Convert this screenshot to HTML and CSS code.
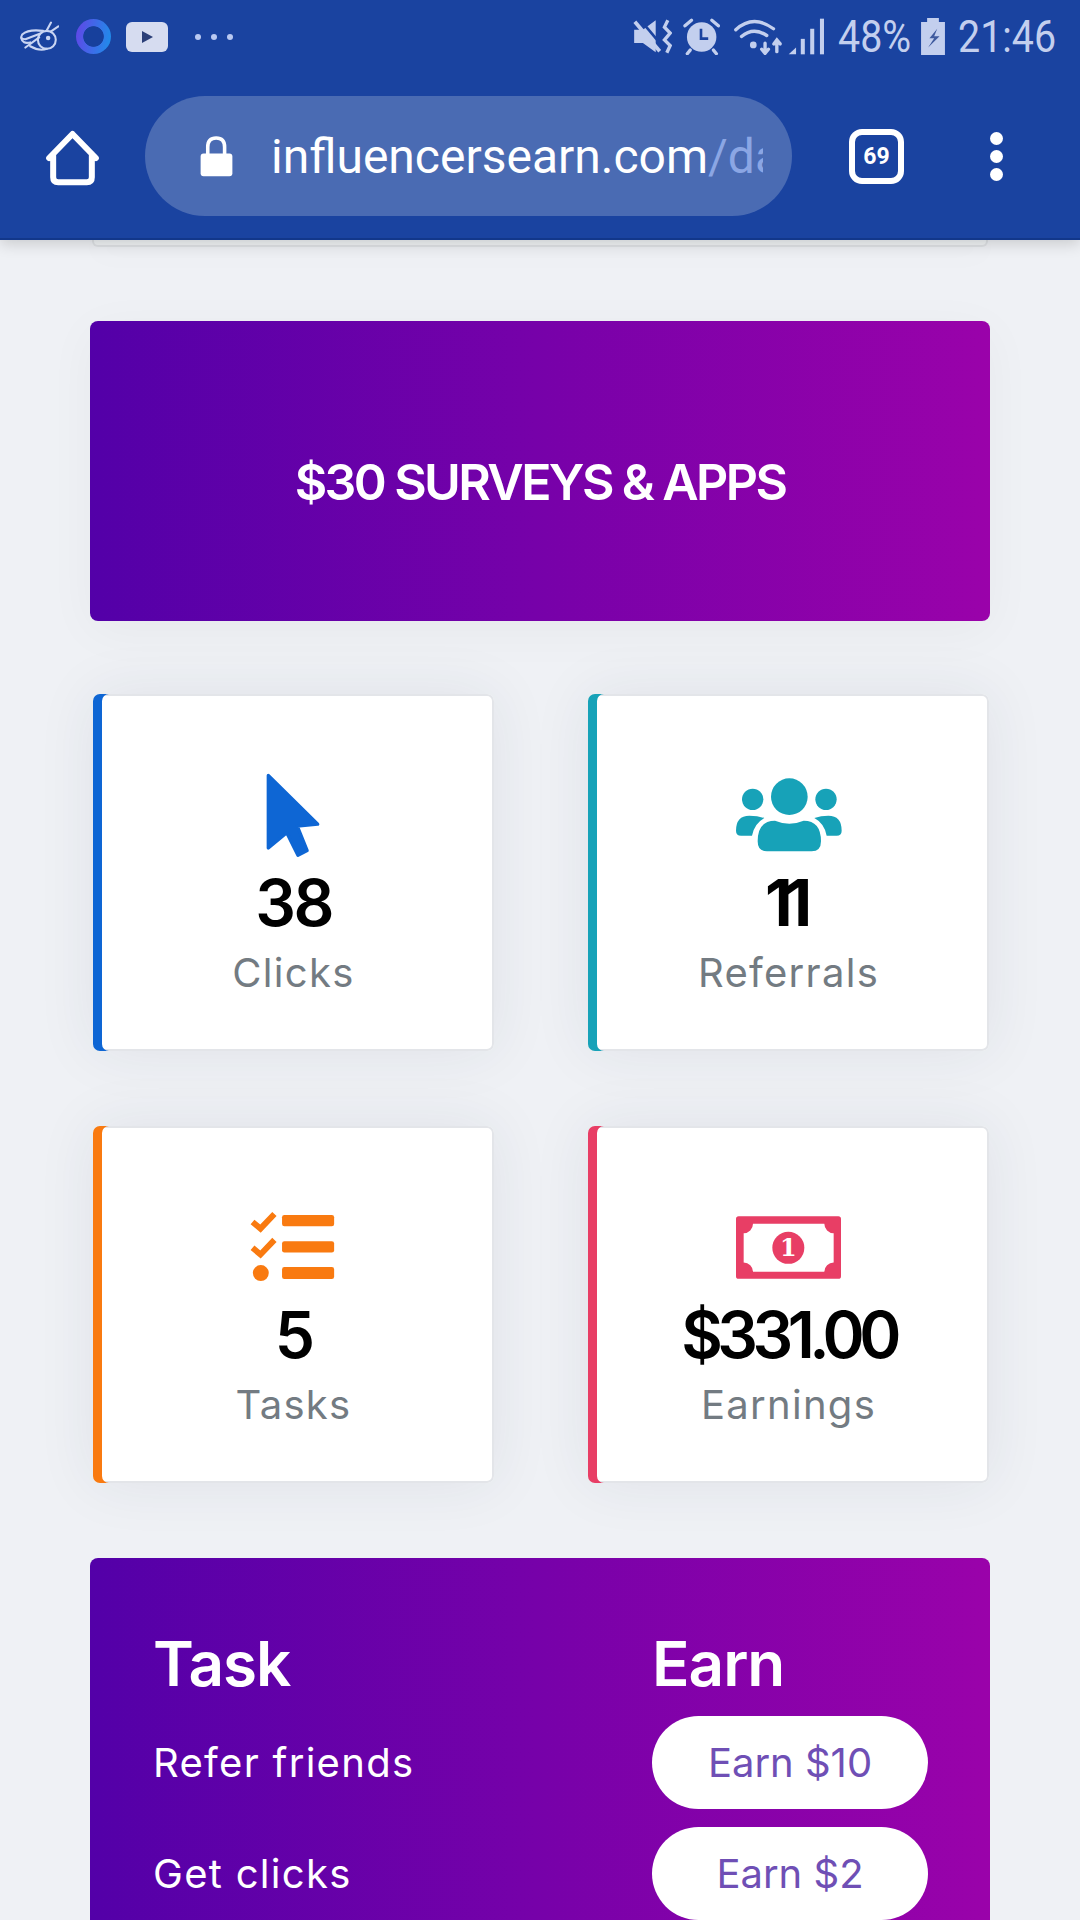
FILE: index.html
```html
<!DOCTYPE html>
<html lang="en">
<head>
    <title>Dashboard</title>
    <link rel="stylesheet" href="styles.css">
</head>
<body>

<div class="screen">
    <header class="browser">
        <div class="status">
            <div class="status-left">
                <svg class="ic-bee" viewBox="25 35 125 93"><g fill="none" stroke="currentColor" stroke-width="6.5" stroke-linecap="round" stroke-linejoin="round"><circle cx="112" cy="92" r="28"/><path d="M100 64 Q55 58 35 75 Q26 90 45 90 L92 72"/><path d="M32 86 Q36 106 60 100 M45 116 L88 84 M60 112 Q88 128 112 120"/><path d="M112 62 L125 38 M124 66 L148 50"/></g><circle cx="116" cy="86" r="7" fill="currentColor"/></svg>
                <span class="ring"></span>
                <svg class="ic-yt" viewBox="0 0 42 30"><rect width="42" height="30" rx="6" fill="#d6dcf0"/><path d="M16 9 L27 15 L16 21Z" fill="#2b3f78"/></svg>
                <div class="more-dots"><i></i><i></i><i></i></div>
            </div>
            <div class="status-right">
                <svg class="ic-mute" viewBox="25 26 115 104"><path d="M28 58 H54 L92 30 V125 L54 97 H28Z" fill="currentColor"/><path d="M44 26 L120 116" stroke="#1a43a0" stroke-width="8"/><path d="M30 34 L104 122" stroke="currentColor" stroke-width="11"/><path d="M128 30 L118 50 L135 68 L118 88 L135 105 L125 126" fill="none" stroke="currentColor" stroke-width="10"/></svg>
                <svg class="ic-alarm" viewBox="175 22 113 113"><circle cx="232" cy="80" r="45" fill="currentColor"/><path d="M230 55 V85 H252" fill="none" stroke="#1a43a0" stroke-width="8"/><path d="M181 46 L201 29 M283 46 L263 29 M197 120 L188 131 M268 120 L277 131" stroke="currentColor" stroke-width="10" stroke-linecap="round"/></svg>
                <svg class="ic-wifi" viewBox="325 20 148 110"><g fill="none" stroke="currentColor" stroke-width="10" stroke-linecap="round"><path d="M333 55 Q385 8 445 52"/><path d="M350 75 Q385 45 425 72"/><path d="M420 95 V124 M410 113 L420 125 L430 113"/><path d="M455 120 V88 M446 97 L455 85 L465 97"/></g><circle cx="385" cy="100" r="10" fill="currentColor"/></svg>
                <svg class="ic-signal" viewBox="490 20 110 110" fill="currentColor"><path d="M492 128 L514 108 V128Z"/><rect x="528" y="82" width="12" height="46"/><rect x="556" y="52" width="12" height="76"/><rect x="585" y="22" width="12" height="106"/></svg>
                <span class="status-pct">48%</span>
                <svg class="ic-batt" viewBox="1105 52 75 110"><path d="M1125 52 H1160 V64 H1178 V162 H1107 V64 H1125Z" fill="currentColor"/><path d="M1155 84 L1132 112 H1146 L1128 140 L1162 106 H1146Z" fill="#3f5a9e"/></svg>
                <span class="status-time">21:46</span>
            </div>
        </div>
        <div class="toolbar">
            <svg class="ic-home" viewBox="125 380 170 180"><path d="M140 470 L210 398 L280 470 M152 458 V528 Q152 543 167 543 H253 Q268 543 268 528 V458" fill="none" stroke="#fff" stroke-width="18" stroke-linecap="round" stroke-linejoin="round"/></svg>
            <div class="urlbar">
                <svg class="ic-lock" viewBox="575 400 108 135"><path d="M602 468 V440 Q602 412 628 412 Q654 412 654 440 V468" fill="none" stroke="#fff" stroke-width="11"/><rect x="580" y="460" width="98" height="70" rx="9" fill="#fff"/></svg>
                <div class="url">influencersearn.com<span class="url-path">/da</span></div>
            </div>
            <div class="tabs">69</div>
            <div class="kebab"><i></i><i></i><i></i></div>
        </div>
    </header>

    <main class="page">
        <div class="prev-card"></div>

        <a class="banner">$30 SURVEYS &amp; APPS</a>

        <section class="stats">
            <div class="stat stat-blue">
                <div class="stat-icon">
                    <svg class="ic-cursor" viewBox="552 272 170 264"><path d="M562 284 L712 432 L650 438 L680 512 L652 526 L618 458 L562 504Z" fill="currentColor" stroke="currentColor" stroke-width="10" stroke-linejoin="round"/></svg>
                </div>
                <div class="stat-num">38</div>
                <div class="stat-label">Clicks</div>
            </div>
            <div class="stat stat-teal">
                <div class="stat-icon">
                    <svg class="ic-users" viewBox="495 292 318 222" fill="currentColor"><circle cx="655" cy="348" r="55"/><circle cx="545" cy="356" r="32"/><circle cx="765" cy="356" r="32"/><path d="M560 482 Q560 420 612 420 Q655 438 698 420 Q750 420 750 482 Q750 512 722 512 H588 Q560 512 560 482Z"/><path d="M495 450 Q495 405 535 405 Q560 405 580 412 Q550 428 543 465 H510 Q495 465 495 450Z"/><path d="M812 450 Q812 405 772 405 Q750 405 730 412 Q760 428 767 465 H797 Q812 465 812 450Z"/></svg>
                </div>
                <div class="stat-num num-ones">11</div>
                <div class="stat-label">Referrals</div>
            </div>
            <div class="stat stat-orange">
                <div class="stat-icon">
                    <svg class="ic-tasks" viewBox="508 298 258 214" fill="currentColor"><rect x="607" y="313" width="157" height="34" rx="7"/><rect x="607" y="392" width="157" height="34" rx="7"/><rect x="607" y="470" width="157" height="36" rx="7"/><circle cx="543" cy="488" r="24"/><path d="M518 334 L542 354 L584 310 M518 412 L542 432 L584 388" fill="none" stroke="currentColor" stroke-width="18"/></svg>
                </div>
                <div class="stat-num">5</div>
                <div class="stat-label">Tasks</div>
            </div>
            <div class="stat stat-pink">
                <div class="stat-icon">
                    <svg class="ic-money" viewBox="497 315 315 188"><path fill-rule="evenodd" fill="currentColor" d="M505 315 H804 Q812 315 812 323 V495 Q812 503 804 503 H505 Q497 503 497 495 V323 Q497 315 505 315Z M548 338 H762 A28 28 0 0 0 790 366 V454 A28 28 0 0 0 762 482 H548 A28 28 0 0 0 520 454 V366 A28 28 0 0 0 548 338Z"/><circle cx="654" cy="410" r="48" fill="currentColor"/><text class="money-one" x="654" y="434" text-anchor="middle">1</text></svg>
                </div>
                <div class="stat-num num-money">$331.00</div>
                <div class="stat-label">Earnings</div>
            </div>
        </section>

        <section class="tasks">
            <h2 class="tasks-title">Task</h2>
            <h2 class="tasks-title">Earn</h2>
            <div class="task-name">Refer friends</div>
            <a class="earn-btn">Earn $10</a>
            <div class="task-name">Get clicks</div>
            <a class="earn-btn">Earn $2</a>
        </section>
    </main>
</div>

</body>
</html>
```

FILE: styles.css
```css
body { margin: 0; font-family: Inter, "Open Sans", sans-serif; background-color: #eff1f5; }
.screen { width: 1080px; height: 1920px; overflow: hidden; display: flex; flex-direction: column; }

/* browser chrome */
.browser { flex: none; position: relative; z-index: 2; height: 240px; box-sizing: border-box; background-color: #1a43a0; border-bottom: 2px solid #12378a; box-shadow: 0 4px 14px rgba(0,0,0,0.16); font-family: Roboto, sans-serif; display: flex; flex-direction: column; }
.status { height: 73px; display: flex; justify-content: space-between; align-items: center; color: #c3cfee; }
.status-left { display: flex; align-items: center; padding-left: 19px; }
.status-right { display: flex; align-items: center; padding-right: 25px; }
.ic-bee { width: 40px; height: 31px; color: #c9d5f3; }
.ring { width: 35px; height: 35px; margin-left: 17px; border-radius: 50%; background: radial-gradient(circle, #17409c 40%, transparent 43%), linear-gradient(100deg, #6244e6, #1c90ea); }
.ic-yt { width: 42px; height: 30px; margin-left: 15px; }
.more-dots { display: flex; gap: 10px; margin-left: 27px; }
.more-dots i { width: 6px; height: 6px; border-radius: 50%; background-color: #b9c9f2; }
.ic-mute { width: 39px; height: 35px; }
.ic-alarm { width: 37px; height: 37px; margin-left: 11px; }
.ic-wifi { width: 50px; height: 37px; margin-left: 13px; }
.ic-signal { width: 37px; height: 37px; margin-left: 5px; }
.status-pct, .status-time { display: inline-block; font-size: 45px; line-height: 50px; transform: scaleX(0.875); transform-origin: left center; white-space: nowrap; }
.status-pct { width: 71px; margin-left: 13px; }
.status-time { width: 97px; margin-left: 12px; }
.ic-batt { width: 26px; height: 37px; margin-left: 11px; }

.toolbar { flex: 1; display: flex; align-items: flex-start; padding-top: 23px; }
.ic-home { width: 57px; height: 60px; margin: 32px 0 0 44px; flex: none; }
.urlbar { width: 647px; height: 120px; margin-left: 44px; border-radius: 60px; background-color: #4a6bb3; display: flex; align-items: center; box-sizing: border-box; padding-left: 54px; }
.ic-lock { width: 35px; height: 44px; flex: none; }
.url { margin-left: 37px; width: 492px; overflow: hidden; white-space: nowrap; color: #fff; font-size: 48px; }
.url-path { color: #8ba6e4; }
.tabs { width: 55px; height: 55px; margin: 33px 0 0 57px; box-sizing: border-box; border: 6px solid #fff; border-radius: 13px; color: #fff; font-size: 23px; font-weight: 700; display: flex; align-items: center; justify-content: center; }
.kebab { margin: 36px 0 0 86px; display: flex; flex-direction: column; gap: 5px; }
.kebab i { width: 13px; height: 13px; border-radius: 50%; background-color: #fff; }

/* page */
.page { flex: 1; padding: 0 90px; min-height: 0; }
.prev-card { height: 7px; margin: 0 2px 74px; background: #f0f3f5; border: 2px solid #dfe2e5; border-top: 0; box-sizing: border-box; border-radius: 0 0 6px 6px; box-shadow: 0 4px 30px rgba(0,0,0,0.05); }

.banner, .tasks { background: linear-gradient(to right, #5300a8, #9a02aa); border-radius: 8px; color: #fff; }
.banner { height: 300px; box-sizing: border-box; padding-top: 22px; display: flex; align-items: center; justify-content: center; font-size: 50px; font-weight: 600; letter-spacing: -2.6px; margin-bottom: 73px; box-shadow: 0 10px 50px rgba(0,0,0,0.04); }

.stats { display: grid; grid-template-columns: 1fr 1fr; gap: 75px 94px; padding: 0 1px 0 3px; margin-bottom: 75px; }
.stat { height: 357px; box-sizing: border-box; padding-top: 79px; background-color: #fff; border-radius: 7px; text-align: center; box-shadow: inset 9px 0 0 var(--accent), inset 0 0 0 2px #e3e5e9, 0 0 60px rgba(40,50,80,0.08); }
.stat-blue { --accent: #0e66d4; }
.stat-teal { --accent: #17a2b8; }
.stat-orange { --accent: #f97a10; }
.stat-pink { --accent: #e83e65; }
.stat-icon { height: 84px; color: var(--accent); display: flex; align-items: center; justify-content: center; }
.ic-cursor { width: 56px; height: 88px; margin-right: 2px; }
.ic-users { width: 106px; height: 74px; }
.ic-tasks { width: 86px; height: 71px; margin: -3px 3px 0 0; }
.ic-money { width: 105px; height: 63px; }
.money-one { font-family: "DejaVu Serif", serif; font-weight: 700; font-size: 72px; fill: #fff; }
.stat-num { font-size: 64px; line-height: 74px; font-weight: 600; color: #000; letter-spacing: -2.5px; margin-top: 9px; }
.num-ones { letter-spacing: -8px; font-weight: 700; padding-right: 8px; }
.num-money { letter-spacing: -5.5px; }
.stat-label { font-size: 40px; line-height: 50px; color: #737b82; letter-spacing: 1.3px; margin-top: 8px; }

.tasks { display: grid; grid-template-columns: 499px 276px; grid-template-rows: 69px 93px 93px; row-gap: 18px; align-items: center; padding: 71px 0 40px 63px; }
.tasks-title { margin: 0; font-size: 62px; font-weight: 600; line-height: 69px; letter-spacing: -1px; }
.task-name { font-size: 40px; letter-spacing: 1.3px; }
.earn-btn { height: 93px; line-height: 93px; border-radius: 47px; background-color: #fff; color: #6f4fb5; font-size: 40px; text-align: center; }
```
